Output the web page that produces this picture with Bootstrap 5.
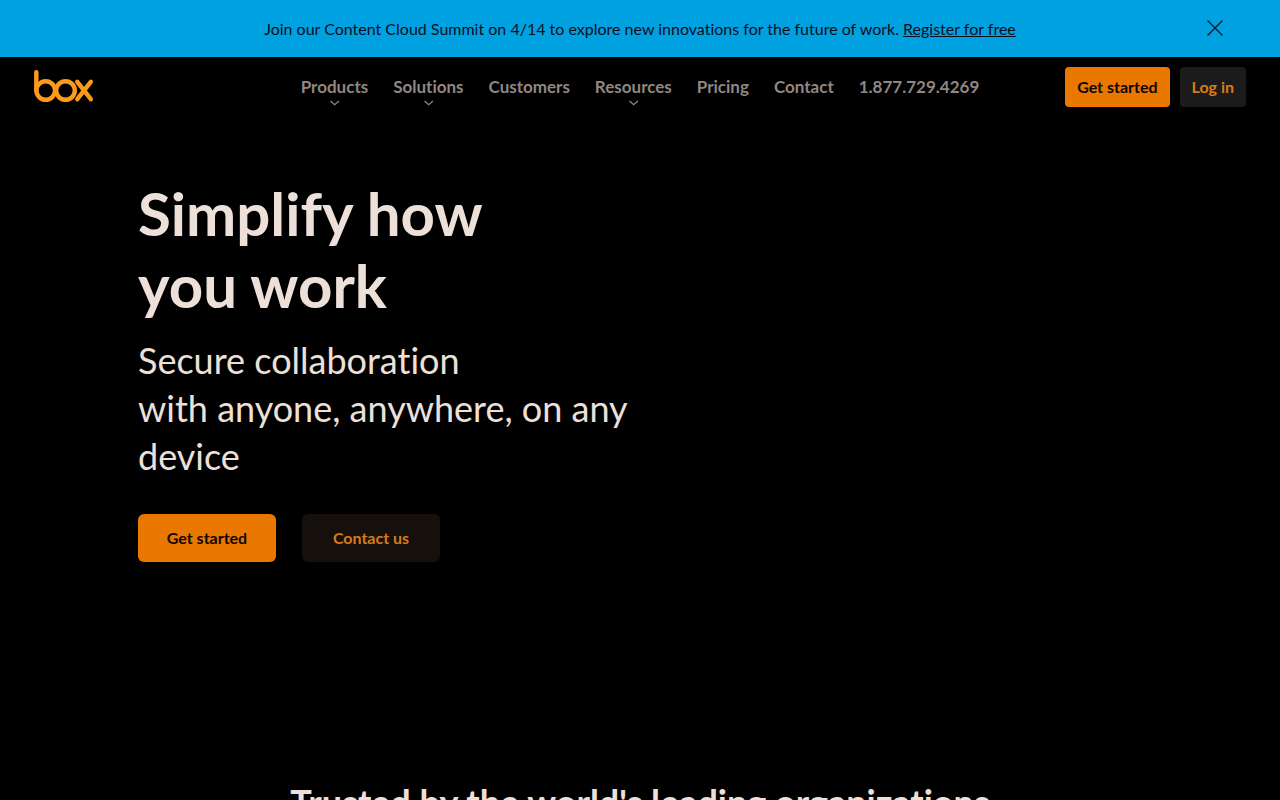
<!DOCTYPE html>
<html lang="en">
<head>
<meta charset="utf-8">
<meta name="viewport" content="width=device-width, initial-scale=1">
<title>Box</title>
<link href="https://cdn.jsdelivr.net/npm/bootstrap@5.3.0/dist/css/bootstrap.min.css" rel="stylesheet">
<style>
  body { background: #000; color: #ede0d9; font-family: Lato, "Liberation Sans", sans-serif; font-variant-ligatures: none; overflow-x: hidden; }
  .promo { background: #00a1e1; color: #0a0f1e; min-height: 57px; font-size: 16px; line-height: 24px; }
  .promo a { color: inherit; }
  .promo-close { right: 56px; top: 19px; line-height: 0; color: inherit; }
  .site-bar { min-height: 60px; padding: 0 34px; }
  .main-links { gap: 25px; }
  .site-bar .nav-link { color: #8f8782; font-size: 17px; font-weight: 700; line-height: 24px; padding: 0; }
  .site-bar .nav-link:hover { color: #ede0d9; }
  .chevron { left: 50%; top: 100%; margin: 1px 0 0 -5px; }
  .account-actions { gap: 10px; }
  .btn { --bs-btn-font-weight: 700; --bs-btn-font-size: 16px; --bs-btn-line-height: 24px; --bs-btn-border-width: 0; --bs-btn-border-radius: 4px; --bs-btn-padding-x: 12px; --bs-btn-padding-y: 8px; }
  .btn-main { --bs-btn-bg: #e97700; --bs-btn-color: #0d0600; --bs-btn-hover-bg: #ff8a12; --bs-btn-hover-color: #000; }
  .btn-login { --bs-btn-bg: #1b1b1b; --bs-btn-color: #d97b16; --bs-btn-hover-bg: #2a2a2a; --bs-btn-hover-color: #ff9a2e; }
  .btn-contact { --bs-btn-bg: #15100b; --bs-btn-color: #d97b16; --bs-btn-hover-bg: #241b12; --bs-btn-hover-color: #ff9a2e; }
  .hero { padding: 60px 138px 0; min-height: 657px; }
  .hero .btn { min-width: 138px; --bs-btn-padding-y: 12px; --bs-btn-border-radius: 6px; }
  .hero h1 { font-size: 60px; line-height: 72px; font-weight: 700; margin-bottom: 15px; }
  .hero-sub { font-size: 36px; line-height: 48px; max-width: 500px; margin-bottom: 34px; }
  .hero-actions { gap: 26px; }
  .trusted h2 { font-size: 36px; line-height: 56px; font-weight: 700; }
</style>
</head>
<body>
<aside class="promo position-relative d-flex align-items-center justify-content-center" aria-label="Announcement">
  <p class="m-0 text-center">Join our Content Cloud Summit on 4/14 to explore new innovations for the future of work. <a href="#register">Register for free</a></p>
  <button type="button" class="promo-close position-absolute border-0 bg-transparent p-0" aria-label="Close">
    <svg width="18" height="18" viewBox="0 0 18 18" fill="none" stroke="currentColor" stroke-width="1.2"><path d="M1.5 1.5l15 15M16.5 1.5l-15 15"/></svg>
  </button>
</aside>
<header class="site-bar position-relative d-flex align-items-center justify-content-between">
  <a href="#home" aria-label="Box home" class="d-flex">
    <svg width="60" height="34" viewBox="0 0 60 34" fill="none" stroke="#fd9a1c" stroke-width="4.4" stroke-linecap="round" stroke-linejoin="round">
      <path d="M2.3 2.3V20.5"/><circle cx="11.7" cy="20.5" r="9.3"/><circle cx="31.5" cy="20.5" r="9.3"/><path d="M43.3 11.8L56.8 29.2M56.8 11.8L43.3 29.2"/>
    </svg>
  </a>
  <nav class="position-absolute start-50 translate-middle-x" aria-label="Main">
    <ul class="nav main-links flex-nowrap text-nowrap">
      <li class="nav-item position-relative"><a class="nav-link" href="#products">Products</a><svg class="chevron position-absolute" width="10" height="6" viewBox="0 0 10 6" fill="none" stroke="#8f8782" stroke-width="1.2"><path d="M.8 1L5 4.8 9.2 1"/></svg></li>
      <li class="nav-item position-relative"><a class="nav-link" href="#solutions">Solutions</a><svg class="chevron position-absolute" width="10" height="6" viewBox="0 0 10 6" fill="none" stroke="#8f8782" stroke-width="1.2"><path d="M.8 1L5 4.8 9.2 1"/></svg></li>
      <li class="nav-item"><a class="nav-link" href="#customers">Customers</a></li>
      <li class="nav-item position-relative"><a class="nav-link" href="#resources">Resources</a><svg class="chevron position-absolute" width="10" height="6" viewBox="0 0 10 6" fill="none" stroke="#8f8782" stroke-width="1.2"><path d="M.8 1L5 4.8 9.2 1"/></svg></li>
      <li class="nav-item"><a class="nav-link" href="#pricing">Pricing</a></li>
      <li class="nav-item"><a class="nav-link" href="#contact">Contact</a></li>
      <li class="nav-item"><a class="nav-link" href="tel:18777294269">1.877.729.4269</a></li>
    </ul>
  </nav>
  <div class="account-actions d-flex">
    <button type="button" class="btn btn-main">Get started</button>
    <button type="button" class="btn btn-login">Log in</button>
  </div>
</header>
<main>
  <section class="hero">
    <h1>Simplify how<br>you work</h1>
    <p class="hero-sub">Secure collaboration<br>with anyone, anywhere, on any device</p>
    <div class="hero-actions d-flex">
      <button type="button" class="btn btn-main">Get started</button>
      <button type="button" class="btn btn-contact">Contact us</button>
    </div>
  </section>
  <section class="trusted text-center">
    <h2>Trusted by the world's leading organizations</h2>
  </section>
</main>
<script src="https://cdn.jsdelivr.net/npm/bootstrap@5.3.0/dist/js/bootstrap.bundle.min.js"></script>
</body>
</html>
